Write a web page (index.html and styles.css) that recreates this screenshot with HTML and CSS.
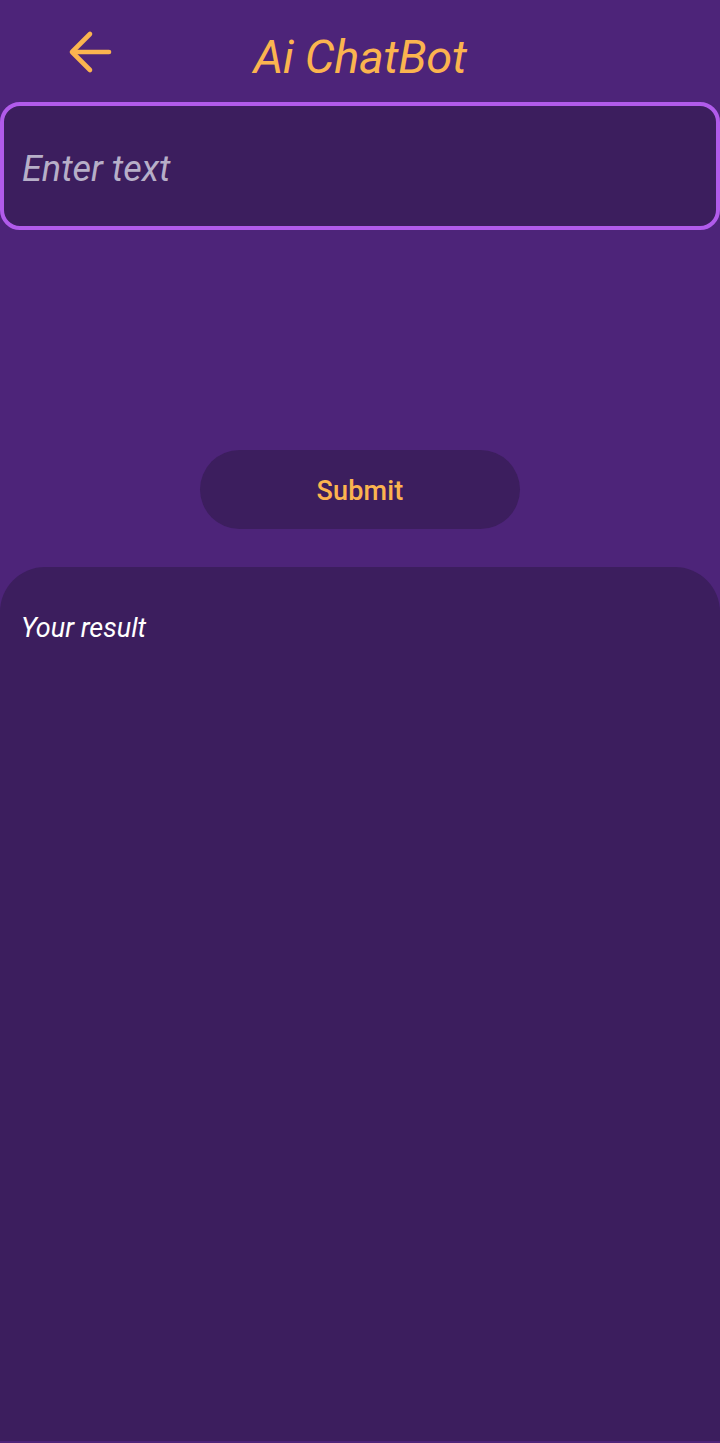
FILE: index.html
```html
<!DOCTYPE html>
<html>
<head>
<meta charset="utf-8">
<link rel="stylesheet" href="styles.css">
</head>
<body>
<div class="screen">
  <header class="topbar">
    <svg class="back" width="44" height="44" viewBox="0 0 44 44" fill="none" stroke="#FBB44F" stroke-width="4.6" stroke-linecap="round" stroke-linejoin="round">
      <path d="M41 22H5"/>
      <path d="M22 4L4 22l18 18"/>
    </svg>
    <h1 class="title">Ai ChatBot</h1>
  </header>
  <div class="input">Enter text</div>
  <div class="btn-row"><button class="submit">Submit</button></div>
  <section class="result">
    <p class="result-text">Your result</p>
  </section>
</div>
</body>
</html>
```
FILE: styles.css
```css
html, body {
  margin: 0;
  padding: 0;
  height: 100%;
}
body {
  background: #2a1840;
  font-family: Roboto, "Noto Sans", sans-serif;
}
.screen {
  height: 1443px;
  box-sizing: border-box;
  padding: 2px 0 2px;
  display: flex;
  flex-direction: column;
  background: #4D2479;
}
.topbar {
  height: 100px;
  position: relative;
  display: flex;
  align-items: center;
  justify-content: center;
}
.back {
  position: absolute;
  left: 68px;
  top: 28px;
}
.title {
  margin: 0;
  font-size: 47px;
  font-weight: 400;
  font-style: italic;
  color: #FBB44F;
  letter-spacing: -0.3px;
  padding-top: 8px;
}
.input {
  height: 128px;
  box-sizing: border-box;
  border: 4px solid #B15BEB;
  border-radius: 20px;
  background: #3C1E5E;
  display: flex;
  align-items: center;
  padding-left: 18px;
  padding-top: 5px;
  font-size: 36px;
  font-style: italic;
  color: #B7AFC8;
}
.btn-row {
  display: flex;
  justify-content: center;
  padding-top: 220px;
}
.submit {
  width: 320px;
  height: 79px;
  border: 0;
  border-radius: 40px;
  background: #3C1E5E;
  color: #FBB44F;
  font-family: Roboto, sans-serif;
  font-size: 27px;
  font-weight: 500;
  letter-spacing: 0.2px;
  padding-top: 3px;
}
.result {
  flex: 1;
  margin-top: 38px;
  background: #3C1E5E;
  border-radius: 45px 45px 0 0;
  padding: 45px 21px;
}
.result-text {
  margin: 0;
  font-size: 27px;
  font-style: italic;
  color: #FFFFFF;
}
```
